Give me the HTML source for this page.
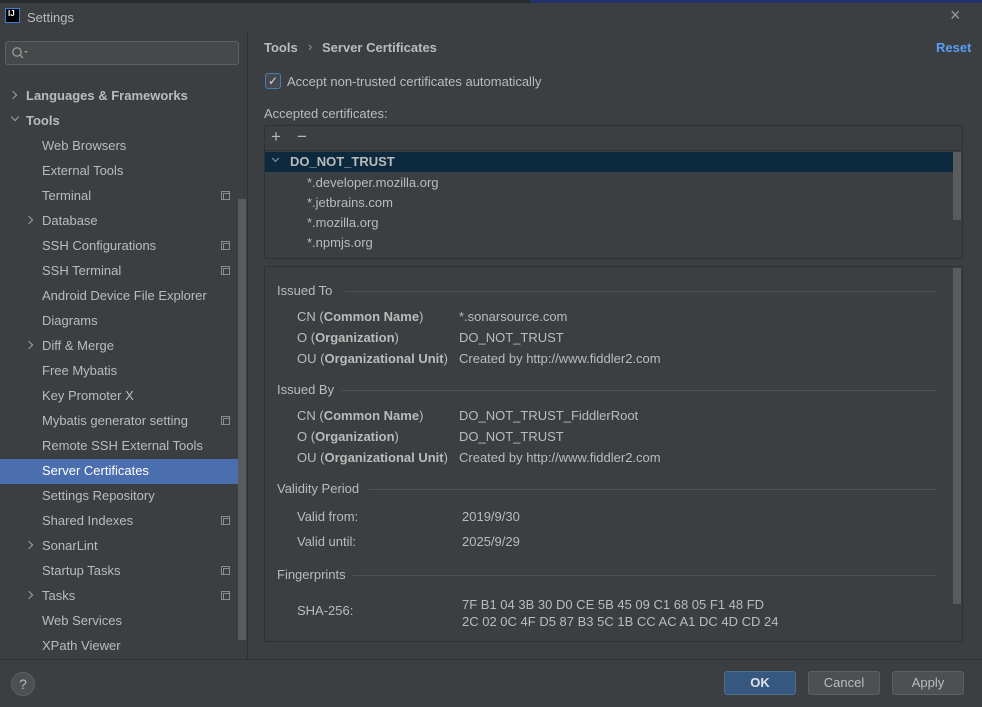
<!DOCTYPE html>
<html><head><meta charset="utf-8"><style>
*{margin:0;padding:0;box-sizing:border-box}
body{width:982px;height:707px;background:#3c3f41;font-family:"Liberation Sans",sans-serif;font-size:13px;color:#bbbbbb;position:relative;overflow:hidden}
.a{position:absolute;white-space:nowrap}
.b{font-weight:bold}
.ic{position:absolute;width:9px;height:9px;border:1px solid #8c8c8c}
.ic:after{content:"";position:absolute;left:1px;top:1px;width:5px;height:5px;border:1px solid #8c8c8c}
.chev{position:absolute;width:6px;height:6px;border-right:1.5px solid #a0a0a0;border-bottom:1.5px solid #a0a0a0}
.r{transform:rotate(-45deg)}
.d{transform:rotate(45deg)}
.hr{position:absolute;height:1px;background:#4e5254}
</style></head><body>
<div class="a" style="left:0;top:0;width:982px;height:3px;background:#2b2b2b"></div>
<div class="a" style="left:530px;top:0;width:452px;height:3px;background:#23306b"></div>
<div class="a" style="left:5px;top:8px;width:15px;height:15px;background:#000;border:1px solid #3f7fd8;color:#fff;font-size:8px;font-weight:bold;line-height:9px;padding-left:2px">IJ</div>
<div class="a" style="left:27px;top:10px">Settings</div>
<div class="a" style="left:950px;top:5px;font-size:18px;color:#999">×</div>
<!-- sidebar -->
<div class="a" style="left:5px;top:41px;width:234px;height:24px;border:1px solid #5e6060;border-radius:3px;background:#45494a"></div>
<svg class="a" style="left:11px;top:46px" width="18" height="14"><circle cx="6" cy="6" r="4.2" stroke="#999" fill="none" stroke-width="1.3"/><line x1="9" y1="9" x2="12" y2="12" stroke="#999" stroke-width="1.3"/><path d="M13 5h4l-2 2z" fill="#999"/></svg>
<div class="chev r" style="left:10px;top:92px"></div>
<div class="a b" style="left:26px;top:88px">Languages &amp; Frameworks</div>
<div class="chev d" style="left:12px;top:114px"></div>
<div class="a b" style="left:26px;top:113px">Tools</div>
<div class="a" style="left:0;top:459px;width:246px;height:25px;background:#4b6eaf"></div>
<div class="a" style="left:42px;top:133px;line-height:25px">Web Browsers<br>External Tools<br>Terminal<br>Database<br>SSH Configurations<br>SSH Terminal<br>Android Device File Explorer<br>Diagrams<br>Diff &amp; Merge<br>Free Mybatis<br>Key Promoter X<br>Mybatis generator setting<br>Remote SSH External Tools<br><span style="color:#fff">Server Certificates</span><br>Settings Repository<br>Shared Indexes<br>SonarLint<br>Startup Tasks<br>Tasks<br>Web Services<br>XPath Viewer</div>
<div class="chev r" style="left:26px;top:217px"></div>
<div class="chev r" style="left:26px;top:342px"></div>
<div class="chev r" style="left:26px;top:542px"></div>
<div class="chev r" style="left:26px;top:592px"></div>
<div class="ic" style="left:221px;top:191px"></div>
<div class="ic" style="left:221px;top:241px"></div>
<div class="ic" style="left:221px;top:266px"></div>
<div class="ic" style="left:221px;top:416px"></div>
<div class="ic" style="left:221px;top:516px"></div>
<div class="ic" style="left:221px;top:566px"></div>
<div class="ic" style="left:221px;top:591px"></div>
<div class="a" style="left:238px;top:199px;width:8px;height:441px;background:#595b5d"></div>
<div class="a" style="left:247px;top:31px;width:1px;height:628px;background:#323232"></div>
<!-- main -->
<div class="a b" style="left:264px;top:40px">Tools</div>
<div class="a" style="left:308px;top:39px;color:#999">›</div>
<div class="a b" style="left:322px;top:40px">Server Certificates</div>
<div class="a b" style="left:936px;top:40px;color:#589df6">Reset</div>
<div class="a" style="left:265px;top:73px;width:16px;height:16px;border:1px solid #4a79b4;border-radius:3px;background:#43494f;color:#ddd;font-size:12px;line-height:14px;text-align:center">✓</div>
<div class="a" style="left:287px;top:74px">Accept non-trusted certificates automatically</div>
<div class="a" style="left:264px;top:106px">Accepted certificates:</div>
<div class="a" style="left:264px;top:125px;width:699px;height:134px;border:1px solid #2f3133"></div>
<div class="a" style="left:265px;top:150px;width:697px;height:1px;background:#2f3133"></div>
<div class="a" style="left:271px;top:127px;font-size:17px">+</div>
<div class="a" style="left:297px;top:127px;font-size:17px">−</div>
<div class="a" style="left:265px;top:152px;width:688px;height:20px;background:#0d293e"></div>
<div class="a" style="left:953px;top:152px;width:8px;height:68px;background:#595b5d"></div>
<div class="chev d" style="left:273px;top:156px;width:5px;height:5px"></div>
<div class="a b" style="left:290px;top:154px">DO_NOT_TRUST</div>
<div class="a" style="left:307px;top:173px;line-height:20px">*.developer.mozilla.org<br>*.jetbrains.com<br>*.mozilla.org<br>*.npmjs.org</div>
<div class="a" style="left:264px;top:266px;width:699px;height:376px;border:1px solid #2f3133"></div>
<div class="a" style="left:953px;top:268px;width:8px;height:336px;background:#595b5d"></div>
<div class="a" style="left:277px;top:283px">Issued To</div><div class="hr" style="left:345px;top:291px;width:591px"></div>
<div class="a" style="left:297px;top:306px;line-height:21px">CN (<b>Common Name</b>)<br>O (<b>Organization</b>)<br>OU (<b>Organizational Unit</b>)</div>
<div class="a" style="left:459px;top:306px;line-height:21px">*.sonarsource.com<br>DO_NOT_TRUST<br>Created by http://www.fiddler2.com</div>
<div class="a" style="left:277px;top:382px">Issued By</div><div class="hr" style="left:341px;top:390px;width:595px"></div>
<div class="a" style="left:297px;top:405px;line-height:21px">CN (<b>Common Name</b>)<br>O (<b>Organization</b>)<br>OU (<b>Organizational Unit</b>)</div>
<div class="a" style="left:459px;top:405px;line-height:21px">DO_NOT_TRUST_FiddlerRoot<br>DO_NOT_TRUST<br>Created by http://www.fiddler2.com</div>
<div class="a" style="left:277px;top:481px">Validity Period</div><div class="hr" style="left:369px;top:489px;width:567px"></div>
<div class="a" style="left:297px;top:504px;line-height:25px">Valid from:<br>Valid until:</div>
<div class="a" style="left:462px;top:504px;line-height:25px">2019/9/30<br>2025/9/29</div>
<div class="a" style="left:277px;top:567px">Fingerprints</div><div class="hr" style="left:353px;top:575px;width:583px"></div>
<div class="a" style="left:297px;top:603px">SHA-256:</div>
<div class="a" style="left:462px;top:596px;line-height:17px">7F B1 04 3B 30 D0 CE 5B 45 09 C1 68 05 F1 48 FD<br>2C 02 0C 4F D5 87 B3 5C 1B CC AC A1 DC 4D CD 24</div>
<!-- footer -->
<div class="a" style="left:0;top:659px;width:982px;height:1px;background:#323232"></div>
<div class="a" style="left:11px;top:672px;width:24px;height:24px;border-radius:50%;background:#4c5052;border:1px solid #5e6060;text-align:center;line-height:22px;font-size:14px">?</div>
<div class="a b" style="left:724px;top:671px;width:72px;height:24px;background:#365880;border:1px solid #4c708c;border-radius:3px;text-align:center;line-height:22px;color:#dfe1e5">OK</div>
<div class="a" style="left:808px;top:671px;width:72px;height:24px;background:#4c5052;border:1px solid #5e6060;border-radius:3px;text-align:center;line-height:22px">Cancel</div>
<div class="a" style="left:892px;top:671px;width:72px;height:24px;background:#4c5052;border:1px solid #5e6060;border-radius:3px;text-align:center;line-height:22px">Apply</div>
</body></html>
